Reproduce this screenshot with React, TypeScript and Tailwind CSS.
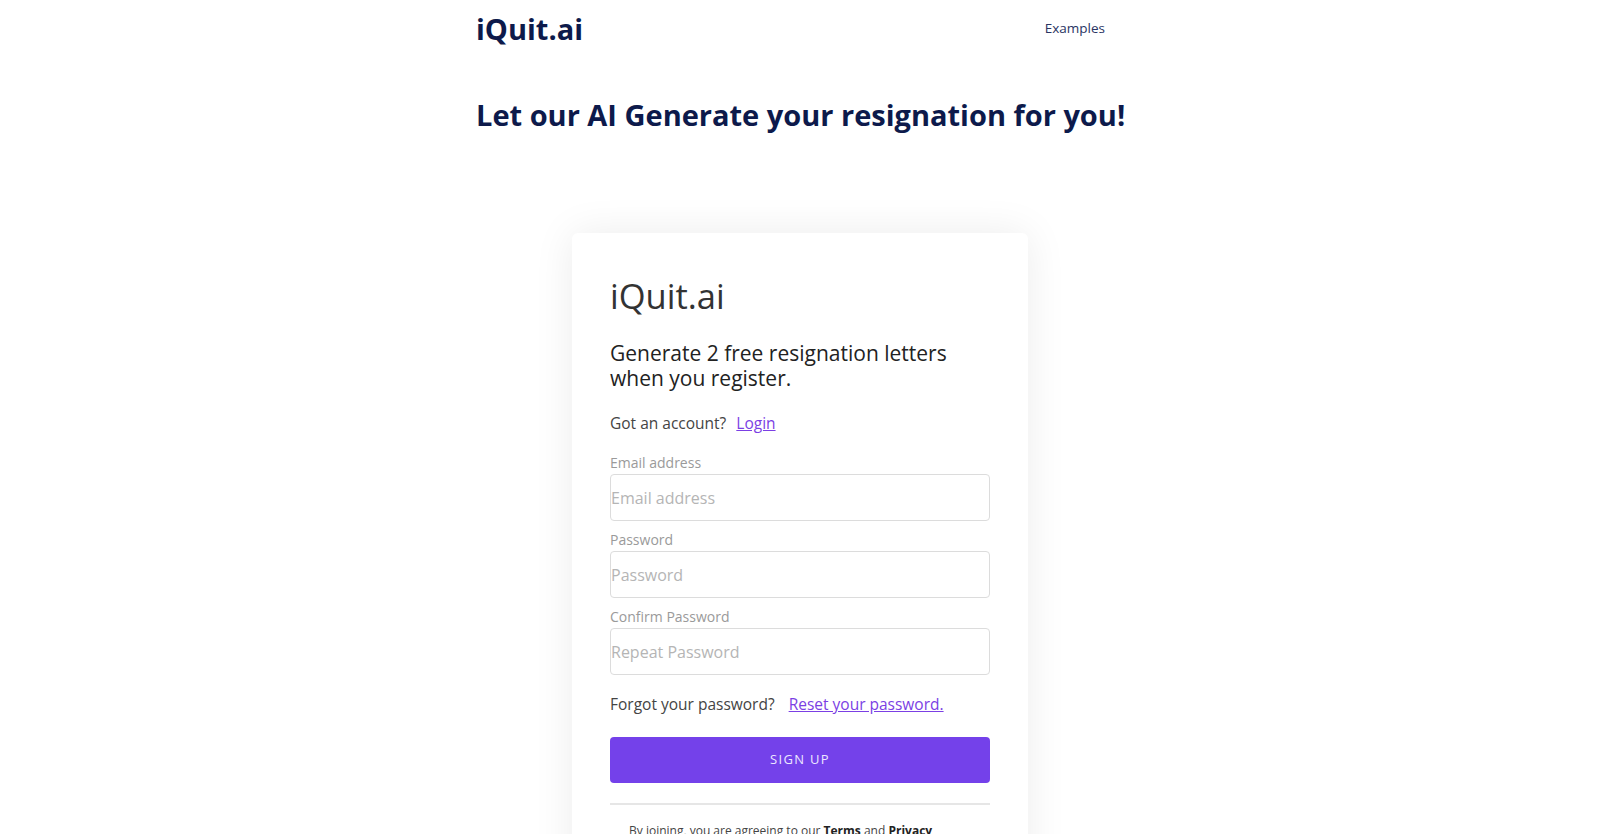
const Field = ({label, placeholder, type}: {label: string; placeholder: string; type: string}) => {
    return (
        <div className="mb-[9px]">
            <label className="block text-[14px] leading-[20px] text-[#9a9a9a]">{label}</label>
            <input
                type={type}
                placeholder={placeholder}
                className="block w-full h-[47px] mt-[1px] border border-[#dcdcdc] rounded-[4px] text-[16px] text-[#333] placeholder:text-[#b5b5b5] outline-none bg-white"
            />
        </div>
    );
}

const App = () => {
    return (
        <div className="min-h-screen bg-white font-['Open_Sans',sans-serif] text-[#333]">
            <header className="w-[648px] mx-auto h-[56px] flex items-center justify-between">
                <a className="text-[29px] font-bold text-[#0d1a4b] leading-none">iQuit.ai</a>
                <a className="text-[13.5px] text-[#2a3463] mr-[19px]">Examples</a>
            </header>
            <h1 className="w-[648px] mx-auto mt-[39px] text-[29px] leading-[40px] font-bold text-[#0d1a4b] whitespace-nowrap">
                Let our AI Generate your resignation for you!
            </h1>
            <div className="w-[456px] mx-auto mt-[98px] bg-white rounded-[6px] shadow-[0_0_40px_rgba(0,0,0,0.08)] px-[38px] pt-[36px] pb-[20px]">
                <h2 className="text-[34.5px] leading-[54px] font-normal text-[#333]">iQuit.ai</h2>
                <p className="mt-[18px] text-[21px] leading-[25px] text-[#222]">
                    Generate 2 free resignation letters when you register.
                </p>
                <p className="mt-[20px] text-[15.5px] leading-[24px] text-[#444]">
                    Got an account?<a className="ml-[10px] text-[#7b3fe4] underline">Login</a>
                </p>
                <form className="mt-[18px]">
                    <Field label="Email address" placeholder="Email address" type="email" />
                    <Field label="Password" placeholder="Password" type="password" />
                    <Field label="Confirm Password" placeholder="Repeat Password" type="password" />
                    <p className="mt-[17px] text-[15.5px] leading-[24px] text-[#444]">
                        Forgot your password?<a className="ml-[14px] text-[#7b3fe4] underline">Reset your password.</a>
                    </p>
                    <button type="button" className="mt-[21px] w-full h-[46px] rounded-[4px] bg-[#7441ea] text-[#ece6ff] text-[13px] tracking-[1.3px] uppercase">
                        Sign up
                    </button>
                </form>
                <hr className="mt-[20px] border-0 border-t-2 border-[#e6e6e6]" />
                <p className="mt-[16px] px-[19px] text-[12px] leading-[20px] text-[#444]">
                    By joining, you are agreeing to our <b className="text-[#222]">Terms</b> and <b className="text-[#222]">Privacy Policy</b>.
                </p>
            </div>
        </div>
    );
}

export default App;
